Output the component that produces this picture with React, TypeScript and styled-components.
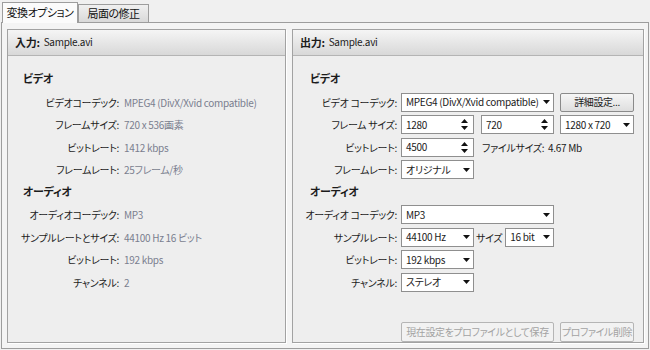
import React from "react";
import styled, { createGlobalStyle } from "styled-components";

const GlobalStyle = createGlobalStyle`
  html, body { margin: 0; padding: 0; background: #f0f0f0; }
  body {
    font-family: "Noto Sans CJK JP", "Noto Sans", sans-serif;
    font-size: 10px;
    letter-spacing: -0.3px;
    color: #1b1b1b;
    font-feature-settings: "palt";
  }
  * { box-sizing: border-box; }
`;

const Window = styled.div`
  width: 650px;
  height: 350px;
  padding: 2px 1px 1px 1px;
  display: flex;
  flex-direction: column;
`;

const TabBar = styled.div`
  display: flex;
  align-items: flex-end;
  height: 20px;
  margin-left: 1px;
  position: relative;
  z-index: 1;
`;

const Tab = styled.div<{ $active?: boolean; $w: number }>`
  width: ${(p) => p.$w}px;
  height: ${(p) => (p.$active ? 21 : 18)}px;
  margin-bottom: ${(p) => (p.$active ? -1 : 0)}px;
  border: 1px solid #9d9d9d;
  border-bottom: none;
  background: ${(p) =>
    p.$active ? "#fbfbfb" : "linear-gradient(#f0f0f0, #d9d9d9)"};
  display: flex;
  align-items: center;
  justify-content: center;
  line-height: 1;
  font-size: 11px;
  letter-spacing: -0.5px;
  padding-bottom: ${(p) => (p.$active ? 2 : 0)}px;
  color: #111;
`;

const Pane = styled.div`
  flex: 1;
  border: 1px solid #9d9d9d;
  background: #f4f4f4;
  padding: 6px 4px 5px 5px;
  display: flex;
  gap: 6px;
`;

const Panel = styled.section<{ $w?: number }>`
  ${(p) => (p.$w ? `width: ${p.$w}px;` : "flex: 1;")}
  border: 1px solid #a2a2a2;
  box-shadow: 1px 1px 0 #ffffff;
  background: #eeeeee;
  display: flex;
  flex-direction: column;
`;

const PanelHeader = styled.header`
  height: 26px;
  border-bottom: 1px solid #b4b4b4;
  background: linear-gradient(#f5f5f5, #d8d8d8);
  display: flex;
  align-items: center;
  padding-left: 7px;
  padding-bottom: 1px;
  line-height: 1;
  gap: 4px;
`;

const HeaderKey = styled.b`
  font-weight: 700;
  font-size: 11px;
`;

const Body = styled.div`
  flex: 1;
  padding-top: 12.5px;
  display: grid;
  grid-auto-rows: 22.5px;
  align-content: start;
`;

const SectionTitle = styled.div<{ $indent: number }>`
  padding-left: ${(p) => p.$indent}px;
  font-weight: 700;
  font-size: 11px;
  display: flex;
  align-items: center;
  padding-bottom: 3px;
`;

const InfoRow = styled.div`
  display: grid;
  grid-template-columns: 111px 1fr;
  column-gap: 5px;
  align-items: center;
`;

const InfoLabel = styled.span`
  text-align: right;
  white-space: nowrap;
`;

const InfoValue = styled.span`
  color: #7a7e8e;
  white-space: nowrap;
`;

const FormRow = styled.div`
  display: flex;
  align-items: center;
`;

const FormLabel = styled.span`
  width: 104px;
  margin-right: 4px;
  text-align: right;
  white-space: nowrap;
`;

const Field = styled.div<{ $w: number; $gap?: number }>`
  width: ${(p) => p.$w}px;
  height: 19px;
  margin-left: ${(p) => p.$gap ?? 0}px;
  border: 1px solid #8f8f8f;
  background: #ffffff;
  display: flex;
  align-items: center;
  justify-content: space-between;
  padding: 0 3px 0 4px;
  white-space: nowrap;
  line-height: 1;
`;

const SpinField = styled(Field)`
  padding-right: 5px;
`;

const InlineText = styled.span<{ $gap: number }>`
  margin-left: ${(p) => p.$gap}px;
  white-space: nowrap;
`;

const ButtonBar = styled.div`
  margin-top: 20.5px;
  padding-left: 108px;
  display: flex;
  gap: 6px;
`;

const Button = styled.button<{ $w: number; $h?: number; $gap?: number }>`
  width: ${(p) => p.$w}px;
  height: ${(p) => p.$h ?? 19}px;
  margin-left: ${(p) => p.$gap ?? 0}px;
  border: 1px solid #8a8a8a;
  border-radius: 2px;
  background: linear-gradient(#f6f6f6, #dedede);
  font: inherit;
  letter-spacing: -0.4px;
  color: #1b1b1b;
  padding: 0;
  line-height: 1;
  white-space: nowrap;
  &:disabled {
    border-color: #b5b5b5;
    background: #f2f2f2;
    color: #a3a3a3;
  }
`;

const Arrow = () => (
  <svg width="7" height="4" viewBox="0 0 7 4">
    <polygon points="0,0 7,0 3.5,4" fill="#111" />
  </svg>
);

const SpinArrows = () => (
  <svg width="7" height="11" viewBox="0 0 7 11">
    <polygon points="0,4 3.5,0 7,4" fill="#111" />
    <polygon points="0,7 7,7 3.5,11" fill="#111" />
  </svg>
);

const Select = ({ w, gap, children }: { w: number; gap?: number; children: React.ReactNode }) => (
  <Field $w={w} $gap={gap}>
    <span>{children}</span>
    <Arrow />
  </Field>
);

const Spin = ({ w, gap, children }: { w: number; gap?: number; children: React.ReactNode }) => (
  <SpinField $w={w} $gap={gap}>
    <span>{children}</span>
    <SpinArrows />
  </SpinField>
);

const inputInfo: [string, [string, string][]][] = [
  [
    "ビデオ",
    [
      ["ビデオコーデック:", "MPEG4 (DivX/Xvid compatible)"],
      ["フレームサイズ:", "720 x 536画素"],
      ["ビットレート:", "1412 kbps"],
      ["フレームレート:", "25フレーム/秒"],
    ],
  ],
  [
    "オーディオ",
    [
      ["オーディオコーデック:", "MP3"],
      ["サンプルレートとサイズ:", "44100 Hz 16 ビット"],
      ["ビットレート:", "192 kbps"],
      ["チャンネル:", "2"],
    ],
  ],
];

export default function App() {
  return (
    <>
      <GlobalStyle />
      <Window>
        <TabBar>
          <Tab $active $w={76}>変換オプション</Tab>
          <Tab $w={71}>局面の修正</Tab>
        </TabBar>
        <Pane>
          <Panel $w={279}>
            <PanelHeader>
              <HeaderKey>入力:</HeaderKey>
              <span>Sample.avi</span>
            </PanelHeader>
            <Body>
              {inputInfo.map(([title, rows]) => (
                <React.Fragment key={title}>
                  <SectionTitle $indent={15}>{title}</SectionTitle>
                  {rows.map(([l, v]) => (
                    <InfoRow key={l}>
                      <InfoLabel>{l}</InfoLabel>
                      <InfoValue>{v}</InfoValue>
                    </InfoRow>
                  ))}
                </React.Fragment>
              ))}
            </Body>
          </Panel>
          <Panel>
            <PanelHeader>
              <HeaderKey>出力:</HeaderKey>
              <span>Sample.avi</span>
            </PanelHeader>
            <Body>
              <SectionTitle $indent={17}>ビデオ</SectionTitle>
              <FormRow>
                <FormLabel>ビデオ コーデック:</FormLabel>
                <Select w={153}>MPEG4 (DivX/Xvid compatible)</Select>
                <Button $w={74} $gap={6}>詳細設定...</Button>
              </FormRow>
              <FormRow>
                <FormLabel>フレーム サイズ:</FormLabel>
                <Spin w={73}>1280</Spin>
                <Spin w={73} gap={7}>720</Spin>
                <Select w={74} gap={6}>1280 x 720</Select>
              </FormRow>
              <FormRow>
                <FormLabel>ビットレート:</FormLabel>
                <Spin w={73}>4500</Spin>
                <InlineText $gap={8}>ファイルサイズ:&nbsp; 4.67 Mb</InlineText>
              </FormRow>
              <FormRow>
                <FormLabel>フレームレート:</FormLabel>
                <Select w={73}>オリジナル</Select>
              </FormRow>
              <SectionTitle $indent={17}>オーディオ</SectionTitle>
              <FormRow>
                <FormLabel>オーディオ コーデック:</FormLabel>
                <Select w={153}>MP3</Select>
              </FormRow>
              <FormRow>
                <FormLabel>サンプルレート:</FormLabel>
                <Select w={73}>44100 Hz</Select>
                <InlineText $gap={2}>サイズ</InlineText>
                <Select w={49} gap={3}>16 bit</Select>
              </FormRow>
              <FormRow>
                <FormLabel>ビットレート:</FormLabel>
                <Select w={73}>192 kbps</Select>
              </FormRow>
              <FormRow>
                <FormLabel>チャンネル:</FormLabel>
                <Select w={73}>ステレオ</Select>
              </FormRow>
            </Body>
            <ButtonBar>
              <Button $w={153} $h={20} disabled>現在設定をプロファイルとして保存</Button>
              <Button $w={74} $h={20} disabled>プロファイル削除</Button>
            </ButtonBar>
          </Panel>
        </Pane>
      </Window>
    </>
  );
}
